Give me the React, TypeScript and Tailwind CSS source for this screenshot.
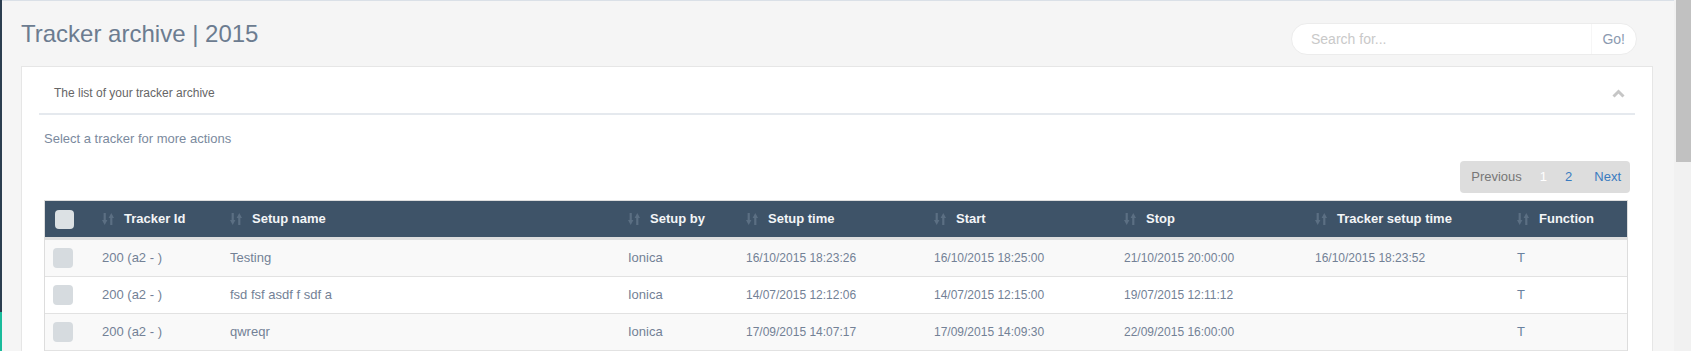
import React from 'react'

const columns = [
  { label: 'Tracker Id', width: 'w-[128px]' },
  { label: 'Setup name', width: 'w-[398px]' },
  { label: 'Setup by', width: 'w-[118px]' },
  { label: 'Setup time', width: 'w-[188px]' },
  { label: 'Start', width: 'w-[190px]' },
  { label: 'Stop', width: 'w-[191px]' },
  { label: 'Tracker setup time', width: 'w-[202px]' },
  { label: 'Function', width: '' },
]

const rows = [
  ['200 (a2 - )', 'Testing', 'Ionica', '16/10/2015 18:23:26', '16/10/2015 18:25:00', '21/10/2015 20:00:00', '16/10/2015 18:23:52', 'T'],
  ['200 (a2 - )', 'fsd fsf asdf f sdf a', 'Ionica', '14/07/2015 12:12:06', '14/07/2015 12:15:00', '19/07/2015 12:11:12', '', 'T'],
  ['200 (a2 - )', 'qwreqr', 'Ionica', '17/09/2015 14:07:17', '17/09/2015 14:09:30', '22/09/2015 16:00:00', '', 'T'],
]

// date columns render a touch narrower than the text ones
const cellText = (j: number) => {
  if (j === 7) return 'text-[13px] text-[#6a819f]'
  if (j >= 3) return 'text-[12px] text-[#738196]'
  return 'text-[13px] text-[#738196]'
}

function SortIcon() {
  return (
    <svg width="12" height="12" viewBox="0 0 12 12" className="shrink-0">
      {/* down arrow on the left, up arrow on the right */}
      <rect x="1.6" y="0" width="2.2" height="8" fill="#5b6f83" />
      <polygon points="0,7 5.4,7 2.7,12" fill="#5b6f83" />
      <polygon points="6.6,5 12,5 9.3,0" fill="#5b6f83" />
      <rect x="8.2" y="4" width="2.2" height="8" fill="#5b6f83" />
    </svg>
  )
}

function ChevronUp() {
  return (
    <svg width="13" height="9" viewBox="0 0 13 9">
      <polyline points="1.5,7.5 6.5,2.5 11.5,7.5" fill="none" stroke="#c6c6c6" strokeWidth="3" />
    </svg>
  )
}

export default function App() {
  return (
    <div className="flex h-[351px] w-[1691px] overflow-hidden bg-[#f5f5f5] font-['Liberation_Sans',Arial,sans-serif]">
      {/* sidebar edge */}
      <div className="flex w-[2px] shrink-0 flex-col">
        <div className="h-[312px] bg-[#2c3e50]" />
        <div className="flex-1 bg-[#1abc9c]" />
      </div>

      <div className="flex-1 border-t border-[#dae0e7] pl-[19px] pr-[21px]">
        {/* Title row */}
        <div className="flex h-[65px] items-start justify-between">
          <h1 className="mt-[19px] text-[24px] leading-[27px] font-normal text-[#6c7c90]">
            Tracker archive | 2015
          </h1>
          <div className="mt-[22px] mr-[16px] flex h-[32px] w-[346px] items-center rounded-full border border-[#ececec] bg-white">
            <span className="flex-1 pl-[19px] text-[14px] text-[#c9c9c9]">Search for...</span>
            <span className="flex h-full items-center border-l border-[#f6f6f6] pl-[10px] pr-[11px] text-[14px] text-[#8b9ab0]">
              Go!
            </span>
          </div>
        </div>

        {/* Panel */}
        <div className="border border-[#e6e6e6] bg-white">
          <div className="mx-[17px] flex items-center justify-between border-b-2 border-[#e5e9ee] pt-[18px] pb-[12px] pl-[15px] pr-[10px]">
            <span className="text-[12px] leading-[16px] text-[#666666]">The list of your tracker archive</span>
            <ChevronUp />
          </div>

          <div className="pl-[22px] pr-[24px]">
            <p className="pt-[15px] text-[13px] leading-[18px] text-[#7b8a9e]">Select a tracker for more actions</p>

            <div className="mt-[13px] flex justify-end">
              <div className="-mr-[2px] flex h-[32px] items-center rounded-[4px] bg-[#dddddd] pl-[11px] pr-[9px] text-[13px]">
                <span className="text-[#777777]">Previous</span>
                <span className="ml-[18px] text-white">1</span>
                <span className="ml-[18px] text-[#3a7bc0]">2</span>
                <span className="ml-[22px] text-[#3a7bc0]">Next</span>
              </div>
            </div>

            <div className="mt-[7px] border border-[#dddddd]">
              <table className="w-full table-fixed border-separate border-spacing-0">
                <colgroup>
                  <col className="w-[49px]" />
                  {columns.map((c) => (
                    <col key={c.label} className={c.width} />
                  ))}
                </colgroup>
                <thead>
                  <tr className="bg-[#3e5368]">
                    <th className="h-[39px] border-b-[3px] border-[#dedede] px-[8px] text-left">
                      <div className="ml-[2px] h-[19px] w-[19px] rounded-[4px] bg-[#dce1e4]" />
                    </th>
                    {columns.map((c) => (
                      <th key={c.label} className="h-[39px] border-b-[3px] border-[#dedede] px-[8px] text-left">
                        <div className="flex items-center gap-[10px] whitespace-nowrap text-[13px] font-bold text-[#f3f5f7]">
                          <SortIcon />
                          <span>{c.label}</span>
                        </div>
                      </th>
                    ))}
                  </tr>
                </thead>
                <tbody>
                  {rows.map((r, i) => (
                    <tr key={i} className={i % 2 === 0 ? 'bg-[#f9f9f9]' : 'bg-white'}>
                      <td className="h-[37px] border-b border-[#e2e2e2] px-[8px]">
                        <div className="h-[20px] w-[20px] rounded-[4px] bg-[#d6dbdf]" />
                      </td>
                      {r.map((cell, j) => (
                        <td
                          key={j}
                          className={`h-[37px] border-b border-[#e2e2e2] px-[8px] whitespace-nowrap ${cellText(j)}`}
                        >
                          {cell}
                        </td>
                      ))}
                    </tr>
                  ))}
                </tbody>
              </table>
            </div>
          </div>
        </div>
      </div>

      {/* scrollbar */}
      <div className="w-[17px] shrink-0 bg-[#f1f1f1] pl-[2px]">
        <div className="h-[162px] bg-[#c1c1c1]" />
      </div>
    </div>
  )
}
